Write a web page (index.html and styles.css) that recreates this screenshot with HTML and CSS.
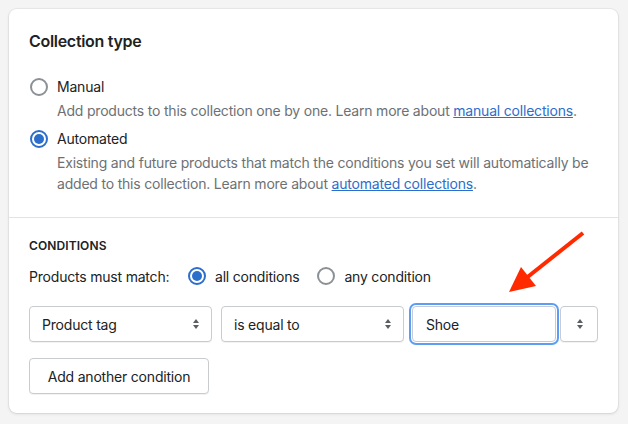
FILE: index.html
```html
<!DOCTYPE html>
<html>
<head>
<meta charset="utf-8">
<link rel="stylesheet" href="styles.css">
</head>
<body>
<div class="card">
  <section class="section section-top">
    <h2 class="title">Collection type</h2>
    <div class="choice">
      <span class="radio"></span>
      <span class="choice-label">Manual</span>
    </div>
    <p class="help">Add products to this collection one by one. Learn more about <a href="#">manual collections</a>.</p>
    <div class="choice choice-second">
      <span class="radio radio-on"></span>
      <span class="choice-label">Automated</span>
    </div>
    <p class="help">Existing and future products that match the conditions you set will automatically be added to this collection. Learn more about <a href="#">automated collections</a>.</p>
  </section>
  <section class="section section-bottom">
    <h3 class="subtitle">CONDITIONS</h3>
    <div class="match">
      <span class="match-label">Products must match:</span>
      <span class="radio radio-on"></span>
      <span class="match-opt">all conditions</span>
      <span class="radio"></span>
      <span class="match-opt">any condition</span>
    </div>
    <div class="cond-row">
      <div class="select sel-a"><span>Product tag</span><svg class="caret" viewBox="0 0 8 12"><path d="M4 1 L7 5 H1 Z M4 11 L7 7 H1 Z"/></svg></div>
      <div class="select sel-b"><span>is equal to</span><svg class="caret" viewBox="0 0 8 12"><path d="M4 1 L7 5 H1 Z M4 11 L7 7 H1 Z"/></svg></div>
      <div class="input">Shoe</div>
      <div class="select sel-c"><svg class="caret" viewBox="0 0 8 12"><path d="M4 1 L7 5 H1 Z M4 11 L7 7 H1 Z"/></svg></div>
    </div>
    <button class="btn">Add another condition</button>
  </section>
  <svg class="arrow" viewBox="0 0 100 80" width="100" height="80">
    <line x1="93" y1="13" x2="30" y2="63" stroke="#ff2a00" stroke-width="4"/>
    <polygon points="19,72 31,47 46,66" fill="#ff2a00"/>
  </svg>
</div>
</body>
</html>
```
FILE: styles.css
```css
* { box-sizing: border-box; }
html, body { margin: 0; }
body {
  background: #f4f4f5;
  font-family: Inter, "Noto Sans", sans-serif;
  color: #202223;
  font-size: 14px;
  letter-spacing: -0.2px;
  padding: 9px 10px 11px 9px;
}
.card {
  position: relative;
  width: 609px;
  height: 404px;
  background: #fff;
  border-radius: 8px;
  box-shadow: 0 0 0 1px rgba(63,63,68,0.05), 0 1px 3px 0 rgba(63,63,68,0.15);
}
.section { padding: 20px 20px; }
.section-top { padding-bottom: 23px; border-bottom: 1px solid #e1e3e5; }
.title {
  margin: 0 0 24px;
  font-size: 16px;
  line-height: 24px;
  font-weight: 600;
  letter-spacing: -0.3px;
}
.choice { display: flex; align-items: center; height: 20px; }
.choice-second { margin-top: 8px; }
.choice-label { margin-left: 9px; line-height: 20px; }
.radio {
  width: 18px; height: 18px;
  border-radius: 50%;
  border: 2px solid #8c9196;
  margin-left: 1px;
  flex: none;
  background: #fff;
  position: relative;
}
.radio-on { border-color: #2c6ecb; }
.radio-on::after {
  content: "";
  position: absolute;
  left: 2px; top: 2px;
  width: 10px; height: 10px;
  border-radius: 50%;
  background: #2c6ecb;
}
.help {
  margin: 3px 0 0 28px;
  color: #6d7175;
  line-height: 21px;
}
.help a { color: #2c6ecb; text-decoration: underline; }
.subtitle {
  margin: 0 0 12px;
  font-size: 12px;
  font-weight: 600;
  line-height: 16px;
  letter-spacing: 0.1px;
}
.match { display: flex; align-items: center; height: 20px; margin-bottom: 20px; }
.match-label { margin-right: 159px; width: 0; white-space: nowrap; }
.match-opt { margin-left: 9px; margin-right: 18px; }
.match .radio { margin-left: 0; }
.cond-row { display: flex; height: 36px; margin-bottom: 16px; }
.select, .input {
  height: 36px;
  border: 1px solid #c9cccf;
  border-radius: 4px;
  display: flex;
  align-items: center;
  padding: 0 12px;
  background: #fff;
  box-shadow: 0 1px 0 rgba(22,29,37,0.05);
}
.select { justify-content: space-between; }
.sel-a { width: 183px; margin-right: 9px; }
.sel-b { width: 183px; margin-right: 8px; }
.input { flex: 1; margin-right: 4px; padding-left: 13px; box-shadow: 0 0 0 1px #fff, 0 0 0 3px #5c9df5; }
.sel-c { width: 38px; justify-content: center; padding: 0; }
.caret { width: 8px; height: 12px; fill: #5c5f62; margin-right: -1px; }
.btn {
  display: block;
  height: 36px;
  width: 180px;
  border: 1px solid #c9cccf;
  border-radius: 4px;
  background: #fff;
  font-family: inherit;
  font-size: 14px;
  letter-spacing: -0.2px;
  color: #202223;
  box-shadow: 0 1px 0 rgba(0,0,0,0.05);
  padding: 0;
}
.arrow { position: absolute; left: 481px; top: 211px; }
```
